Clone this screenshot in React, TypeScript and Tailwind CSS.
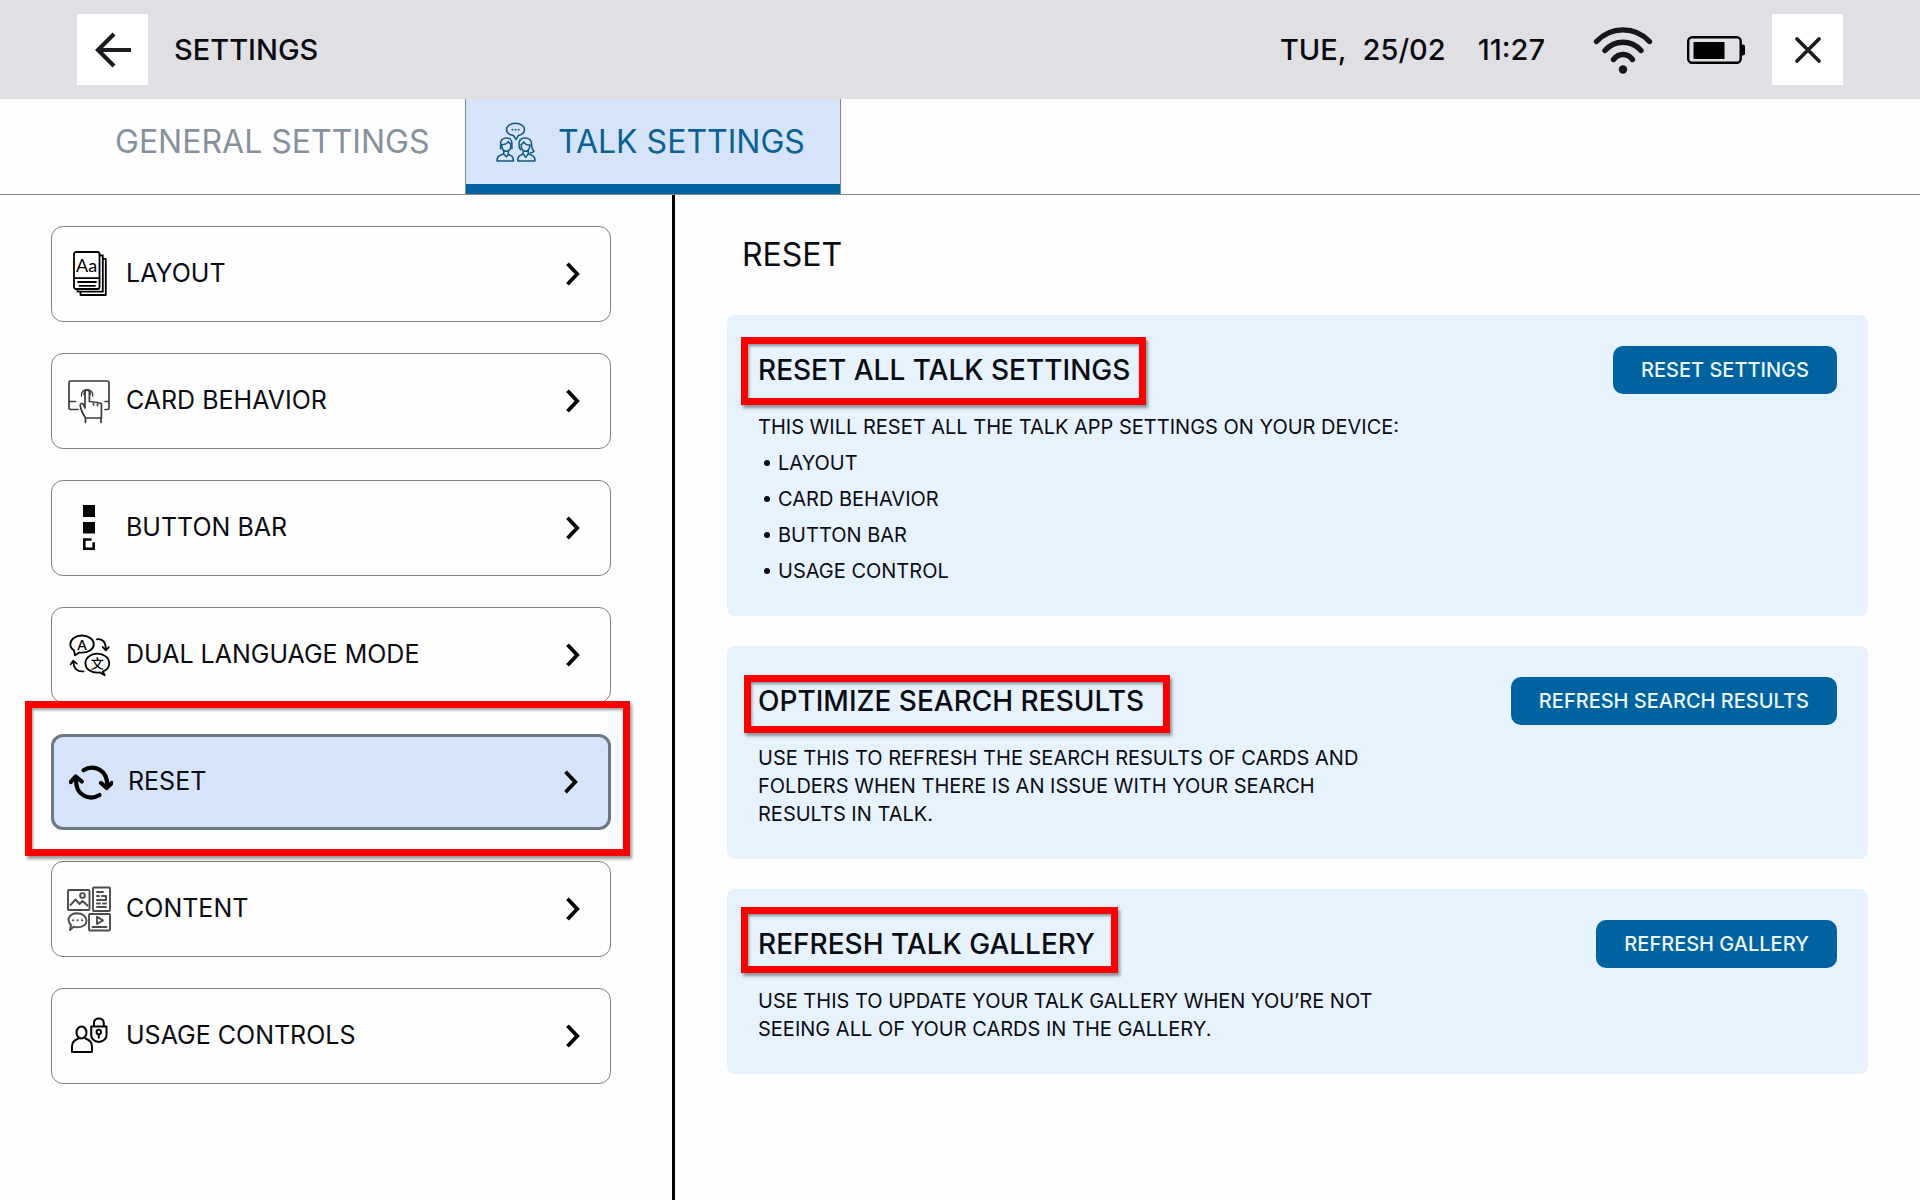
import type { ReactNode } from "react";

type IconProps = { className?: string };

const BackIcon = () => (
  <svg viewBox="0 0 36 36" className="h-9 w-9" fill="none" stroke="#1c1c20" strokeWidth="4.2">
    <path d="M36 18H3" />
    <path d="M19 2 3 18l16 16" />
  </svg>
);

const CloseIcon = () => (
  <svg viewBox="0 0 26 26" className="h-[26px] w-[26px]" fill="none" stroke="#1c1c20" strokeWidth="3.6" strokeLinecap="round">
    <path d="M2 2l22 22M24 2 2 24" />
  </svg>
);

const WifiIcon = () => (
  <svg viewBox="0 0 60 48" className="h-12 w-[60px]" fill="none" stroke="#17171b" strokeWidth="5.4" strokeLinecap="round">
    <path d="M3.500 15.500C18 0 42 0 56.500 15.500" />
    <path d="M12 24.500c10-11 26-11 36 0" />
    <path d="M20.500 33.500c5-6.600 14-6.600 19 0" />
    <circle cx="30" cy="43.500" r="4.200" fill="#17171b" stroke="none" />
  </svg>
);

const BatteryIcon = () => (
  <svg viewBox="0 0 58 28" className="h-7 w-[58px]" fill="none">
    <rect x="1.200" y="1.200" width="52.500" height="25.600" rx="4" stroke="#000" strokeWidth="2.400" />
    <rect x="6.500" y="6" width="31" height="17" fill="#000" />
    <path d="M54 8.500h2q2 0 2 2v7q0 2-2 2h-2z" fill="#000" />
  </svg>
);

const TalkIcon = () => (
  <svg viewBox="0 0 39 39" className="h-10 w-10" fill="none" stroke="#14587f" strokeWidth="1.500" strokeLinejoin="round" strokeLinecap="round">
    <path d="M17 13.200c-4-.7-6.800-3-6.800-5.800 0-3.500 3.900-6.200 8.800-6.200s8.800 2.700 8.800 6.200c0 2.800-2.400 5-6 5.800L19.500 17z" />
    <path d="M16 7.500h.1M19 7.500h.1M22 7.500h.1" strokeWidth="1.800" />
    <path d="M4.500 26v-5c0-3.500 2.400-5.500 5.500-5.500s5.500 2 5.500 5.500v5M5.500 22c3.500 0 5.500-1 6.500-3 .8 1.700 2 2.500 3 3" />
    <path d="M5.500 22.500c0 4 2 6 4.500 6s4.500-2 4.500-6M7.500 28v3L3 33c-1.300.7-2 2-2 5h16c0-3-.6-4.300-2-5l-3-1.500V28M7.500 31l2.500 3 2-2.500" />
    <path d="M24 27c-1.500-1.500-1.600-3.500-1.600-5.500 0-4 2.600-6 6-6s6.200 2 6.200 6c0 3 .2 5 2.400 7-1 1.400-2 1.600-3.500 1.400" />
    <path d="M24.500 22c0 4.200 1.700 6.500 4.200 6.500S33 26 33 22.500c-3 0-5-1.500-6-3.200-.5 1.500-1.500 2.300-2.500 2.700zM26.500 28v3l-3.600 2c-1.200.7-1.700 2-1.700 5H38c0-3-.6-4.300-2-5l-4.500-2v-3M26.500 31l2.500 3.500 2.500-3.500" />
  </svg>
);

const LayoutIcon = ({ className }: IconProps) => (
  <svg viewBox="0 0 44 48" className={className} fill="none" stroke="#000" strokeWidth="1.800" strokeLinejoin="round" strokeLinecap="round">
    <rect x="7" y="2" width="25.500" height="37" rx="2" />
    <path d="M7 28.200h25.500M11 32h18M12.500 35.800h15.500" />
    <path d="M33.500 5.500h2.300v36.200H10.500v-2M36.500 8.800h2.300v36.200H13.500v-2.500" />
    <text x="9" y="21.500" fontSize="18" fontFamily="Lato, sans-serif" fill="#000" stroke="none">Aa</text>
  </svg>
);

const CardIcon = ({ className }: IconProps) => (
  <svg viewBox="0 0 44 48" className={className} fill="none" stroke="#3c3c3e" strokeWidth="1.700" strokeLinejoin="round" strokeLinecap="round">
    <path d="M11 32.500H3.500q-1.500 0-1.500-1.500V5.500Q2 4 3.500 4h37Q42 4 42 5.500V31q0 1.500-1.500 1.500H38M2.500 24.500h6M38 24.500h3.500" />
    <path d="M18 31V15c0-3 4.400-3 4.400 0v9.500c5 .2 9 1 12 2V41H18.500c-3-4.500-4.600-8-5.300-12.500-.3-2.200 2.300-2.800 3.200-.8L18 31M26.500 25v3M30.500 25.600v3" />
    <path d="M14.500 19c-1.500-8.500 12.500-8.500 11.200 0M17 17.500c-.3-5.500 6.700-5.500 6.300 0" strokeWidth="1.400" />
    <path d="M18.500 41v4.500M34 41v4.500" />
  </svg>
);

const ButtonBarIcon = ({ className }: IconProps) => (
  <svg viewBox="0 0 44 48" className={className} fill="none">
    <rect x="16" y="1" width="12" height="12" fill="#000" />
    <rect x="16" y="18" width="12" height="11.500" fill="#000" />
    <path d="M24.500 35.500h-7.200v9.300h9.400v-6.500" stroke="#000" strokeWidth="2.600" />
  </svg>
);

const LanguageIcon = ({ className }: IconProps) => (
  <svg viewBox="0 0 44 48" className={className} fill="none" stroke="#000" strokeWidth="1.800" strokeLinejoin="round" strokeLinecap="round">
    <path d="M7 19.500c-2.400-1.700-3.700-3.800-3.700-6.300C3.300 8.400 8.700 4.500 15 4.500s11.800 3.900 11.800 8.700c0 4.900-5.300 8.500-11.800 8.500-1 0-1.800 0-2.600-.2L8 24.200z" />
    <path d="M35.800 40.500c4-1.500 6.400-4.700 6.400-8.300 0-5.500-5.300-9.600-11.900-9.600s-11.900 4.100-11.900 9.600 5.300 9.400 11.900 9.400c.8 0 1.700-.1 2.400-.3l5 2.900z" />
    <path d="M30 8.300c5.300-.7 8.700 2.500 8.800 10M35.700 16l3.100 3.400 3-3.300M16.500 40.300c-5.600.8-9.300-2-10.300-9.500M3.700 33.300l2.500-3.500 3.600 2.800" />
    <text x="15" y="18.500" textAnchor="middle" fontSize="14" fontWeight="600" fontFamily="Lato, sans-serif" fill="#000" stroke="none">A</text>
    <text x="30.200" y="37" textAnchor="middle" fontSize="13" fontWeight="500" fontFamily="Noto Sans CJK SC, sans-serif" fill="#000" stroke="none">文</text>
  </svg>
);

const ResetIcon = ({ className }: IconProps) => (
  <svg viewBox="0 0 44 48" className={className} fill="none" stroke="#000" strokeWidth="4.200" strokeLinejoin="round" strokeLinecap="round">
    <path d="M14.500 12.200c10-6 24.500-.5 23.500 15.500" />
    <path d="M32 25l5.700 5 5-5" />
    <path d="M30.500 37c-10 6-24.500.5-23.300-15.500" />
    <path d="M1.800 24l5-5.500 6 5" />
  </svg>
);

const ContentIcon = ({ className }: IconProps) => (
  <svg viewBox="0 0 44 48" className={className} fill="none" stroke="#4c4c4e" strokeWidth="1.900" strokeLinejoin="round" strokeLinecap="round">
    <rect x="1" y="5" width="21.500" height="20" rx="1" />
    <path d="M3.500 20l5-5.500 4 4.500 3-3 5 4.500" />
    <circle cx="15.500" cy="10.500" r="2.400" />
    <rect x="26" y="2.500" width="17" height="23.500" rx="1" />
    <path d="M30 7h6M30 11h2M35 11h4v4h-4M30 15h9M30 18.500h3M36 18.500h3M30 22h9" />
    <path d="M3 45l1-5C-1 35 2 28.500 10 28.300c12 0 13 14 .5 14-1.700 0-2.800-.2-3.800-.6z" />
    <path d="M6 35.300h.2M10.500 35.300h.2M15 35.300h.2" strokeWidth="2" />
    <rect x="22" y="29" width="21" height="16.500" rx="1" />
    <path d="M30 31.700v7.300l6-3.600zM25.500 42h14" />
  </svg>
);

const UsageIcon = ({ className }: IconProps) => (
  <svg viewBox="0 0 44 48" className={className} fill="none" stroke="#000" strokeWidth="2" strokeLinejoin="round" strokeLinecap="round">
    <ellipse cx="14.500" cy="20.500" rx="5" ry="6" />
    <path d="M11.500 26.500C7 28 5 31 5 34.500V40h20v-5.500c0-3.500-2-6.500-6.500-8" />
    <path d="M24.200 14.500h15.300V23c0 4-3.200 6.200-7.700 7-4.500-.8-7.600-3-7.600-7zM27 14v-3c0-6 9.800-6 9.800 0v3" />
    <circle cx="31.800" cy="20" r="2.200" />
    <path d="M31.800 22.500v3.300" />
  </svg>
);

const Chevron = () => (
  <svg viewBox="0 0 14 24" className="h-6 w-3.5" fill="none" stroke="#000" strokeWidth="3.800">
    <path d="M1.500 1.800 11.200 12 1.500 22.200" />
  </svg>
);

/** Red frame that calls attention to the element it surrounds. */
const Highlight = ({ className }: IconProps) => (
  <span
    aria-hidden="true"
    className={`pointer-events-none absolute z-10 border-[7px] border-[#fb0000] shadow-[2px_3px_3px_rgba(0,0,0,0.4),inset_1px_2px_3px_rgba(0,0,0,0.4)] ${className}`}
  />
);

const menu = [
  { label: "LAYOUT", Icon: LayoutIcon },
  { label: "CARD BEHAVIOR", Icon: CardIcon },
  { label: "BUTTON BAR", Icon: ButtonBarIcon },
  { label: "DUAL LANGUAGE MODE", Icon: LanguageIcon },
  { label: "RESET", Icon: ResetIcon, active: true },
  { label: "CONTENT", Icon: ContentIcon },
  { label: "USAGE CONTROLS", Icon: UsageIcon },
];

type PanelProps = { title: string; action: string; frame: string; children: ReactNode };

const Panel = ({ title, action, frame, children }: PanelProps) => (
  <section className="rounded-lg bg-[#e6f2fe] px-[31px] py-[31px]">
    <div className="flex items-center justify-between">
      <h2 className="relative text-[28px] leading-[48px] font-medium whitespace-nowrap">
        {title}
        <Highlight className={frame} />
      </h2>
      <button type="button" className="h-12 rounded-[10px] bg-[#00629e] px-7 text-[20px] font-medium text-[#eaf7ff]">
        {action}
      </button>
    </div>
    <div className="mt-[19px] max-w-[640px] text-[20px] leading-7">{children}</div>
  </section>
);

export default function App() {
  return (
    <div className="flex min-h-screen flex-col bg-[#fefefe] font-['Inter',sans-serif] text-[#0b0b12]">
      <header className="flex h-[99px] items-center bg-[#e0dfe4] px-[77px]">
        <button type="button" aria-label="Back" className="flex size-[71px] items-center justify-center bg-white">
          <BackIcon />
        </button>
        <h1 className="ml-[26px] text-[29px] font-medium">SETTINGS</h1>
        <div className="ml-auto flex items-center text-[29px] font-medium">
          <span>TUE,</span>
          <span className="ml-4">25/02</span>
          <span className="ml-8">11:27</span>
          <span className="ml-12"><WifiIcon /></span>
          <span className="ml-[34px]"><BatteryIcon /></span>
          <button type="button" aria-label="Close" className="ml-[27px] flex size-[71px] items-center justify-center bg-white">
            <CloseIcon />
          </button>
        </div>
      </header>

      <nav aria-label="Settings sections" className="flex h-24 border-b border-[#8a8c8f]">
        <button type="button" className="w-[465px] pb-2.5 pl-[115px] text-left text-[32px] text-[#85919d]">
          GENERAL SETTINGS
        </button>
        <button
          type="button"
          aria-current="page"
          className="flex w-[376px] flex-col border-x border-[#7a8a9a] bg-[#d6e4fa] text-[32px] text-[#0c6190]"
        >
          <span className="flex flex-1 items-center gap-[22px] pl-[30px] whitespace-nowrap">
            <TalkIcon />
            TALK SETTINGS
          </span>
          <span className="h-2.5 w-full bg-[#00629e]" />
        </button>
      </nav>

      <div className="flex flex-1">
        <aside className="w-[35%] pt-[31px] pr-[61px] pb-10 pl-[51px]">
          <ul className="flex flex-col gap-[31px]">
            {menu.map(({ label, Icon, active }) => (
              <li key={label} className="relative">
                <button
                  type="button"
                  aria-current={active ? "page" : undefined}
                  className={`flex h-24 w-full items-center rounded-xl pr-[30px] pl-[15px] text-[25px] ${
                    active ? "border-[3px] border-[#6d7885] bg-[#d6e4fa]" : "border border-[#808082] bg-[#fefefe]"
                  }`}
                >
                  <Icon className="mr-[15px] h-12 w-11" />
                  {label}
                  <span className="ml-auto"><Chevron /></span>
                </button>
                {active && <Highlight className="-top-[33px] -right-[19px] -bottom-[26px] -left-[26px]" />}
              </li>
            ))}
          </ul>
        </aside>

        <main className="flex-1 border-l-[3px] border-black pt-10 pr-[52px] pb-10 pl-[52px]">
          <h2 className="pl-[15px] text-[32px] leading-10">RESET</h2>
          <div className="mt-10 flex flex-col gap-[30px]">
            <Panel title="RESET ALL TALK SETTINGS" action="RESET SETTINGS" frame="-top-[9px] -right-4 -bottom-[11px] -left-[17px]">
              <p className="whitespace-nowrap">THIS WILL RESET ALL THE TALK APP SETTINGS ON YOUR DEVICE:</p>
              <ul className="mt-2 flex flex-col gap-2">
                {["LAYOUT", "CARD BEHAVIOR", "BUTTON BAR", "USAGE CONTROL"].map((item) => (
                  <li key={item} className="flex items-center gap-2 pl-1.5">
                    <span className="size-1.5 rounded-full bg-[#0b0b12]" />
                    {item}
                  </li>
                ))}
              </ul>
            </Panel>
            <Panel title="OPTIMIZE SEARCH RESULTS" action="REFRESH SEARCH RESULTS" frame="-top-[2px] -right-[26px] -bottom-2 -left-[14px]">
              <p>
                USE THIS TO REFRESH THE SEARCH RESULTS OF CARDS AND FOLDERS WHEN THERE IS AN ISSUE WITH YOUR SEARCH
                RESULTS IN TALK.
              </p>
            </Panel>
            <Panel title="REFRESH TALK GALLERY" action="REFRESH GALLERY" frame="-top-[13px] -right-[23px] -bottom-[5px] -left-[17px]">
              <p>USE THIS TO UPDATE YOUR TALK GALLERY WHEN YOU’RE NOT SEEING ALL OF YOUR CARDS IN THE GALLERY.</p>
            </Panel>
          </div>
        </main>
      </div>
    </div>
  );
}
